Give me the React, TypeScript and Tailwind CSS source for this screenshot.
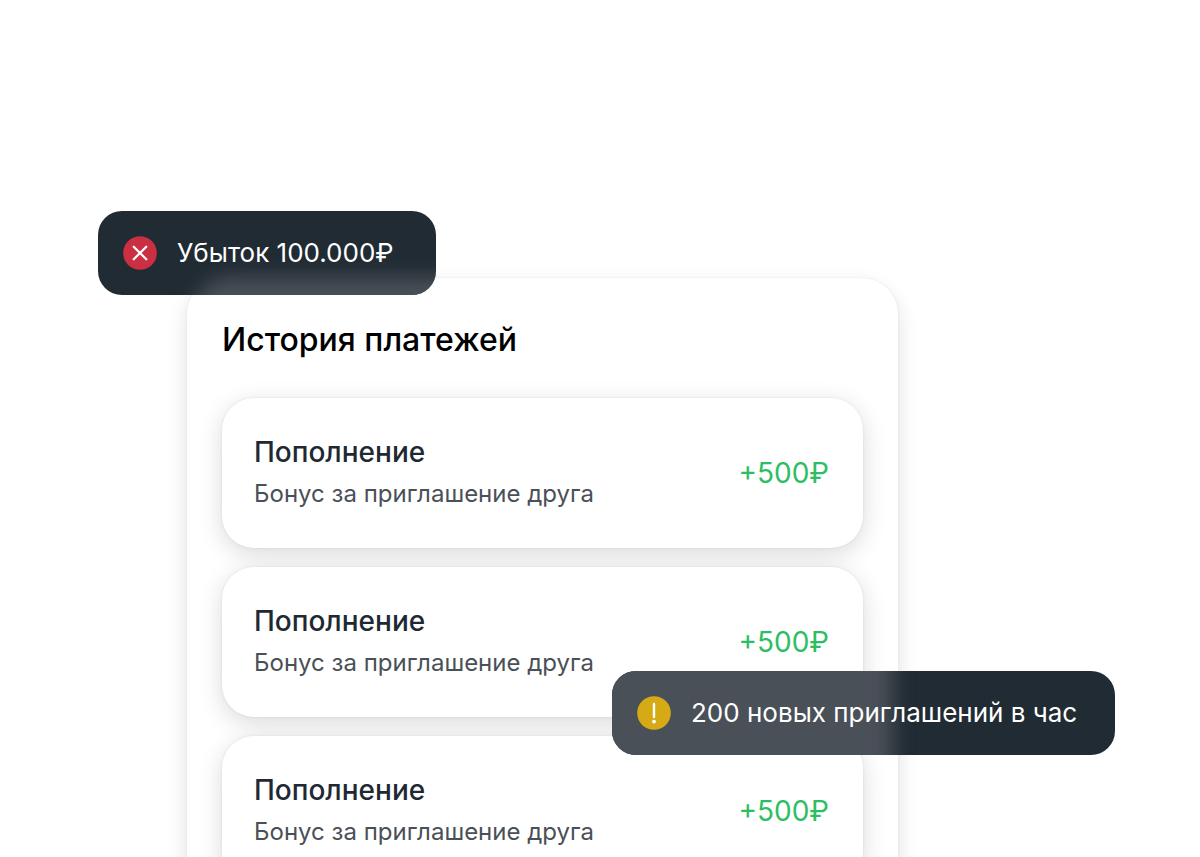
import { ReactNode } from "react";
import clsx from "clsx";

const PAYMENTS = [
  { id: 1, title: "Пополнение", note: "Бонус за приглашение друга", amount: "+500₽" },
  { id: 2, title: "Пополнение", note: "Бонус за приглашение друга", amount: "+500₽" },
  { id: 3, title: "Пополнение", note: "Бонус за приглашение друга", amount: "+500₽" },
];

function CrossIcon() {
  return (
    <svg viewBox="0 0 34 34" className="size-[34px] shrink-0" aria-hidden="true">
      <circle cx="17" cy="17" r="16.8" fill="#cb2f42" />
      <path d="M10.7 10.7 23.3 23.3M23.3 10.7 10.7 23.3" stroke="#fff" strokeWidth="2.2" strokeLinecap="round" />
    </svg>
  );
}

function WarningIcon() {
  return (
    <svg viewBox="0 0 34 34" className="size-[34px] shrink-0" aria-hidden="true">
      <circle cx="17" cy="17" r="16.8" fill="#d6aa14" />
      <path d="M17 8v13" stroke="#fff" strokeWidth="2.4" strokeLinecap="round" />
      <circle cx="17" cy="25.6" r="1.9" fill="#fff" />
    </svg>
  );
}

// glow is the light patch where the toast overlaps the panel
function Toast({ icon, glow, className, children }: { icon: ReactNode; glow: string; className: string; children: ReactNode }) {
  return (
    <div
      role="status"
      className={clsx(
        "absolute flex h-[84px] items-center overflow-hidden rounded-3xl bg-[#212b33] pl-[25px] text-[26px] leading-8 whitespace-nowrap text-white",
        className,
      )}
    >
      <div className={clsx("absolute bg-[#4a5058] blur-[10px]", glow)} />
      <div className="relative flex items-center gap-5">
        {icon}
        <span>{children}</span>
      </div>
    </div>
  );
}

function PaymentCard({ title, note, amount }: { title: string; note: string; amount: string }) {
  return (
    <li className="flex h-[150px] items-center justify-between rounded-[32px] bg-white pr-[34px] pl-8 shadow-[0_0_3px_rgba(0,0,0,0.08),0_6px_24px_rgba(0,0,0,0.15)]">
      <div className="pt-0.5">
        <h2 className="text-[28px] leading-10 font-medium text-[#1f2933]">{title}</h2>
        <p className="text-2xl leading-[44px] text-[#4a5058]">{note}</p>
      </div>
      <span className="text-[28px] leading-10 text-[#2dbe64]">{amount}</span>
    </li>
  );
}

export default function App() {
  return (
    <main className="h-screen overflow-hidden bg-white pt-[278px] pr-[302px] pl-[187px] font-['Inter','Liberation_Sans',sans-serif]">
      <section className="relative rounded-[36px] bg-white px-[35px] pt-10 pb-[35px] shadow-[0_0_2px_rgba(0,0,0,0.08),0_8px_20px_rgba(0,0,0,0.13)]">
        <h1 className="mb-9 text-[32px] leading-[44px] font-medium text-black">История платежей</h1>
        <ul className="flex flex-col gap-[19px]">
          {PAYMENTS.map((p) => (
            <PaymentCard key={p.id} title={p.title} note={p.note} amount={p.amount} />
          ))}
        </ul>

        <Toast
          icon={<CrossIcon />}
          glow="top-[66px] -right-8 -bottom-8 left-[96px] rounded-tl-[36px]"
          className="-top-[67px] -left-[89px] w-[338px]"
        >
          Убыток 100.000₽
        </Toast>
        <Toast
          icon={<WarningIcon />}
          glow="-inset-y-8 -left-8 right-[222px]"
          className="top-[393px] -right-[217px] w-[503px]"
        >
          200 новых приглашений в час
        </Toast>
      </section>
    </main>
  );
}
